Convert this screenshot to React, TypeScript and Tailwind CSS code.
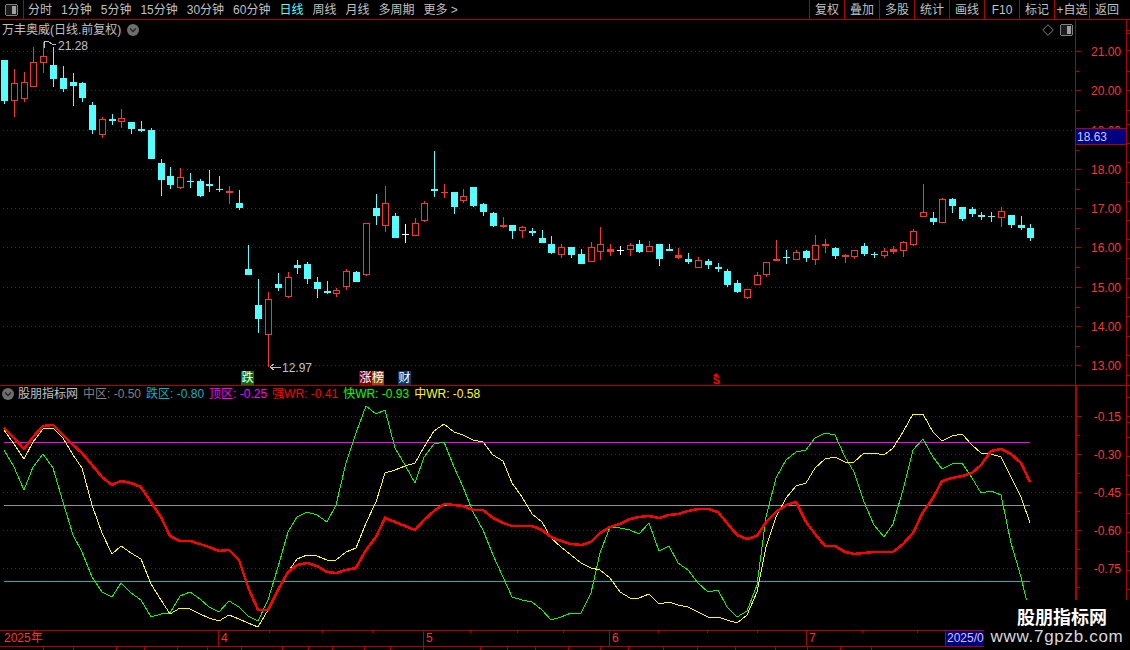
type Kind = "c" | "r" | "w";
// x, wick top, wick bottom, body top, body bottom, kind
const CANDLES: [number, number, number, number, number, Kind][] = [
  [4, 60, 104, 60, 101, "c"], [14, 69, 117, 83, 101, "r"], [24, 72, 102, 82, 99, "r"], [33, 47, 87, 62, 87, "r"],
  [43, 42, 73, 56, 63, "r"], [53, 47, 87, 65, 79, "c"], [63, 66, 92, 78, 89, "c"], [73, 73, 106, 82, 86, "c"],
  [82, 82, 102, 83, 98, "c"], [92, 102, 134, 105, 130, "c"], [102, 117, 138, 119, 135, "r"], [112, 114, 125, 119, 121, "c"],
  [121, 109, 128, 118, 122, "r"], [131, 122, 134, 122, 129, "c"], [141, 121, 132, 129, 131, "c"], [151, 128, 159, 130, 159, "c"],
  [161, 159, 196, 163, 180, "c"], [170, 167, 189, 176, 185, "c"], [180, 168, 189, 177, 188, "r"], [190, 173, 188, 181, 182, "c"],
  [200, 179, 197, 181, 196, "c"], [209, 170, 192, 184, 186, "c"], [219, 176, 192, 189, 190, "c"], [229, 186, 204, 191, 193, "r"],
  [239, 190, 210, 203, 208, "c"], [248, 245, 275, 269, 275, "c"], [258, 279, 333, 305, 319, "c"], [268, 292, 367, 299, 335, "r"],
  [278, 273, 291, 284, 288, "c"], [288, 272, 298, 277, 297, "r"], [297, 260, 274, 265, 268, "c"], [307, 262, 284, 264, 279, "c"],
  [317, 277, 298, 282, 289, "c"], [327, 281, 294, 291, 293, "c"], [336, 288, 297, 290, 294, "r"], [346, 269, 290, 271, 287, "r"],
  [356, 271, 282, 272, 282, "c"], [366, 223, 276, 223, 275, "r"], [376, 194, 225, 208, 216, "c"], [385, 186, 232, 203, 226, "r"],
  [395, 213, 238, 216, 238, "c"], [405, 224, 243, 234, 235, "w"], [415, 218, 236, 223, 236, "r"], [424, 201, 222, 203, 221, "r"],
  [434, 151, 197, 189, 191, "c"], [444, 184, 198, 192, 193, "r"], [454, 192, 214, 192, 207, "c"], [463, 189, 203, 196, 201, "r"],
  [473, 187, 207, 187, 206, "c"], [483, 203, 216, 204, 212, "c"], [493, 212, 227, 213, 226, "c"], [503, 217, 228, 225, 227, "r"],
  [512, 225, 239, 225, 231, "c"], [522, 226, 238, 227, 231, "r"], [532, 228, 236, 231, 233, "c"], [542, 230, 243, 238, 243, "c"],
  [551, 236, 254, 244, 253, "c"], [561, 244, 258, 247, 255, "r"], [571, 247, 258, 247, 255, "c"], [581, 249, 264, 254, 264, "c"],
  [591, 242, 262, 247, 262, "r"], [600, 227, 260, 244, 252, "r"], [610, 244, 256, 249, 252, "r"], [620, 246, 255, 250, 251, "w"],
  [630, 243, 256, 245, 250, "r"], [639, 240, 253, 244, 252, "c"], [649, 241, 252, 246, 252, "r"], [659, 244, 266, 244, 259, "c"],
  [669, 244, 251, 249, 251, "c"], [678, 248, 259, 255, 258, "r"], [688, 253, 264, 259, 262, "c"], [698, 257, 268, 260, 268, "r"],
  [708, 259, 269, 261, 265, "c"], [718, 263, 272, 267, 269, "c"], [727, 269, 287, 271, 285, "c"], [737, 280, 293, 283, 292, "c"],
  [747, 289, 299, 289, 298, "r"], [757, 272, 285, 275, 285, "r"], [766, 262, 277, 262, 275, "r"], [776, 240, 261, 259, 261, "r"],
  [786, 250, 264, 257, 258, "c"], [796, 250, 260, 252, 260, "r"], [806, 250, 262, 251, 258, "c"], [815, 235, 265, 245, 260, "r"],
  [825, 239, 253, 244, 246, "r"], [835, 247, 259, 248, 256, "c"], [845, 254, 263, 255, 257, "r"], [854, 250, 259, 250, 257, "r"],
  [864, 243, 256, 246, 254, "c"], [874, 252, 258, 254, 255, "c"], [884, 248, 258, 251, 256, "r"], [893, 246, 254, 249, 252, "r"],
  [903, 241, 257, 242, 251, "r"], [913, 229, 246, 231, 245, "r"], [923, 184, 217, 212, 217, "r"], [933, 212, 225, 218, 222, "c"],
  [942, 198, 223, 199, 223, "r"], [952, 198, 213, 199, 206, "c"], [962, 207, 221, 207, 219, "c"], [972, 207, 217, 209, 214, "c"],
  [981, 212, 220, 215, 217, "c"], [991, 212, 222, 216, 217, "c"], [1001, 207, 227, 211, 218, "r"], [1011, 215, 228, 215, 225, "c"],
  [1021, 216, 230, 225, 228, "c"], [1030, 224, 241, 228, 238, "c"],
];

const RED_WR = [
  428, 438, 449, 437, 426, 425, 435, 445, 453, 465, 477, 485, 481, 483, 487, 502, 517, 536, 541, 541,
  544, 547, 551, 550, 560, 587, 610, 610, 590, 572, 565, 563, 566, 572, 573, 570, 568, 550, 537, 518,
  522, 526, 530, 520, 511, 504, 505, 506, 510, 510, 518, 523, 526, 526, 526, 530, 537, 541, 544, 545,
  542, 533, 527, 524, 519, 517, 516, 518, 515, 514, 511, 509, 509, 512, 523, 535, 539, 536, 522, 512,
  505, 502, 522, 534, 546, 546, 552, 554, 553, 552, 552, 552, 544, 533, 512, 498, 481, 478, 476, 473,
  465, 451, 449, 454, 463, 482,
];
const YELLOW_WR = [
  430, 444, 459, 442, 429, 428, 438, 455, 468, 505, 533, 554, 546, 553, 559, 584, 600, 614, 608, 609,
  614, 618, 621, 615, 619, 623, 627, 610, 589, 572, 559, 555, 556, 560, 560, 552, 548, 523, 502, 473,
  470, 466, 463, 447, 431, 424, 432, 435, 440, 442, 455, 461, 483, 497, 514, 522, 538, 547, 555, 563,
  568, 570, 578, 592, 598, 598, 594, 604, 602, 605, 607, 612, 617, 617, 620, 623, 615, 592, 547, 517,
  498, 486, 483, 468, 459, 457, 462, 462, 453, 453, 455, 448, 432, 414, 414, 432, 441, 436, 434, 445,
  453, 454, 457, 477, 497, 523,
];
const GREEN_WR = [
  450, 467, 490, 467, 454, 468, 502, 535, 552, 577, 592, 597, 583, 593, 600, 617, 614, 613, 596, 592,
  599, 607, 612, 601, 607, 616, 621, 600, 567, 532, 517, 512, 515, 522, 505, 463, 433, 406, 414, 410,
  448, 465, 483, 457, 444, 442, 467, 487, 512, 530, 555, 577, 597, 600, 602, 610, 620, 617, 613, 613,
  593, 553, 527, 528, 530, 534, 523, 551, 546, 563, 570, 583, 592, 590, 607, 617, 611, 585, 517, 478,
  460, 452, 450, 438, 433, 435, 457, 472, 502, 525, 537, 524, 490, 450, 439, 457, 469, 464, 463, 478,
  493, 491, 495, 543, 577, 615,
];

const PRICE_TICKS: [number, string][] = [
  [51, "21.00"], [90, "20.00"], [130, "19.00"], [169, "18.00"], [208, "17.00"], [247, "16.00"], [287, "15.00"], [326, "14.00"], [365, "13.00"],
];
const WR_TICKS: [number, string][] = [
  [416, "-0.15"], [454, "-0.30"], [492, "-0.45"], [530, "-0.60"], [568, "-0.75"],
];
const PERIODS = ["分时", "1分钟", "5分钟", "15分钟", "30分钟", "60分钟", "日线", "周线", "月线", "多周期", "更多 >"];
const TOOLS = ["复权", "叠加", "多股", "统计", "画线", "F10", "标记", "+自选", "返回"];
const LEGEND = [
  { label: "中区: -0.50", className: "text-[#808080]" },
  { label: "跌区: -0.80", className: "text-[#10b0c0]" },
  { label: "顶区: -0.25", className: "text-[#ff00ff]" },
  { label: "强WR: -0.41", className: "text-[#ff0000]" },
  { label: "快WR: -0.93", className: "text-[#00ff00]" },
  { label: "中WR: -0.58", className: "text-[#ffff00]" },
];
const MONTHS = [
  { label: "2025年", className: "w-[218px] pl-[4px]" },
  { label: "4", className: "w-[205px] border-l border-[#b00000] pl-[2px]" },
  { label: "5", className: "w-[186px] border-l border-[#b00000] pl-[2px]" },
  { label: "6", className: "w-[197px] border-l border-[#b00000] pl-[2px]" },
  { label: "7", className: "w-[139px] border-l border-[#b00000] pl-[2px]" },
];
const BAR_TICKS = [269, 322, 372, 470, 517, 563, 658, 707, 757, 862, 917];
const FOOT_TICKS = [43, 73, 116, 144, 177, 207, 241, 282, 308, 332, 364, 390, 423, 480, 507, 535, 568, 600, 628, 663, 697, 735, 775, 807, 840, 871];
const SIDE_TICKS = [30, 33, 50, 71, 90, 110, 124, 143, 162, 182, 201, 220, 239, 258, 278, 297, 316, 336, 355, 375, 385, 397, 416, 422, 437, 456, 475, 494, 513, 532, 551, 570, 589];

const RED = "#ff3232";
const CYAN = "#54ffff";
const LINE = "#b00000";
const DOT = "#a00000";

function toPoints(ys: number[]) {
  return ys.map((y, i) => `${CANDLES[i][0]},${y}`).join(" ");
}

function ChevronBadge() {
  return (
    <svg width="12" height="12" viewBox="0 0 12 12" className="shrink-0">
      <circle cx="6" cy="6" r="6" fill="#6e6e6e" />
      <path d="M3 4.5 L6 7.5 L9 4.5" fill="none" stroke="#262626" strokeWidth="1.4" />
    </svg>
  );
}

function PanelIcon() {
  return (
    <svg width="13" height="12" viewBox="0 0 13 12" className="shrink-0" shapeRendering="crispEdges">
      <rect x="0.5" y="0.5" width="12" height="11" rx="2" fill="#1c1c1c" stroke="#808080" />
      <rect x="7" y="2" width="4" height="8" fill="#a0a0a0" />
    </svg>
  );
}

function Candle({ c }: { c: (typeof CANDLES)[number] }) {
  const [x, hi, lo, top, bottom, kind] = c;
  const color = kind === "c" ? CYAN : kind === "w" ? "#ffffff" : RED;
  const h = bottom - top;
  const hollow = kind === "r" && h > 3;
  return (
    <g shapeRendering="crispEdges">
      <rect x={x} y={hi} width="1" height={lo - hi} fill={color} />
      {hollow ? (
        <rect x={x - 2.5} y={top + 0.5} width="6" height={h - 1} fill="#000" stroke={color} />
      ) : (
        <rect x={x - 3} y={top} width="7" height={Math.max(h, 1)} fill={color} />
      )}
    </g>
  );
}

function Dots({ ys }: { ys: number[] }) {
  return (
    <g shapeRendering="crispEdges">
      {ys.map((y) => (
        <line key={y} x1="3" x2="1075" y1={y + 0.5} y2={y + 0.5} stroke={DOT} strokeDasharray="1 3" />
      ))}
    </g>
  );
}

function SideRail() {
  return (
    <g shapeRendering="crispEdges">
      <rect x="1126" y="20" width="1" height="630" fill={LINE} />
      {SIDE_TICKS.map((y) => (
        <rect key={y} x="1127" y={y} width="3" height="1" fill={LINE} />
      ))}
    </g>
  );
}

function PriceChart() {
  return (
    <svg width="1075" height="365" viewBox="0 20 1075 365" className="block shrink-0">
      <Dots ys={PRICE_TICKS.map((t) => t[0])} />
      {CANDLES.map((c) => (
        <Candle key={c[0]} c={c} />
      ))}
      <g fill="none" stroke="#c0c0c0" shapeRendering="crispEdges">
        <path d="M44 48 V41 L48 41 L52 44 L56 45" />
        <path d="M270 367 H281 M270 367 L274 364 M270 367 L274 370" />
      </g>
      <g fill="#c0c0c0" fontSize="12">
        <text x="58" y="50">21.28</text>
        <text x="282" y="372">12.97</text>
      </g>
      <path d="M716 373 L719 376 H713 Z" fill="#ff0000" />
    </svg>
  );
}

function PriceAxis() {
  return (
    <svg width="55" height="365" viewBox="1075 20 55 365" className="block shrink-0">
      <g shapeRendering="crispEdges">
        <rect x="1075" y="20" width="1" height="365" fill={LINE} />
        {PRICE_TICKS.map(([y]) => (
          <g key={y}>
            <rect x="1076" y={y} width="5" height="1" fill={LINE} />
            <rect x="1076" y={y + 20} width="3" height="1" fill={LINE} />
          </g>
        ))}
      </g>
      <SideRail />
      <g fill={RED} fontSize="12">
        {PRICE_TICKS.map(([y, label]) => (
          <text key={y} x="1121" y={y + 5} textAnchor="end">{label}</text>
        ))}
      </g>
      <rect x="1075.5" y="128.5" width="51" height="16" fill="#000080" stroke={LINE} shapeRendering="crispEdges" />
      <text x="1077" y="141" fontSize="12" fill="#c8c8ff">18.63</text>
    </svg>
  );
}

function WrChart() {
  return (
    <svg width="1075" height="244" viewBox="0 386 1075 244" className="block shrink-0">
      <Dots ys={WR_TICKS.map((t) => t[0])} />
      <g shapeRendering="crispEdges">
        <rect x="4" y="442" width="1026" height="1" fill="#ff00ff" />
        <rect x="4" y="505" width="1026" height="1" fill="#909090" />
        <rect x="4" y="581" width="1026" height="1" fill="#20b0b0" />
      </g>
      <g fill="none" shapeRendering="crispEdges">
        <polyline points={toPoints(GREEN_WR)} stroke="#00ff00" />
        <polyline points={toPoints(YELLOW_WR)} stroke="#ffff00" />
        <polyline points={toPoints(RED_WR)} stroke="#ff0000" strokeWidth="2.5" />
      </g>
    </svg>
  );
}

function WrAxis() {
  return (
    <svg width="55" height="244" viewBox="1075 386 55 244" className="block shrink-0">
      <g shapeRendering="crispEdges">
        <rect x="1075" y="386" width="2" height="244" fill={LINE} />
        {WR_TICKS.map(([y]) => (
          <g key={y}>
            <rect x="1077" y={y} width="5" height="1" fill={LINE} />
            <rect x="1077" y={y + 19} width="3" height="1" fill={LINE} />
          </g>
        ))}
      </g>
      <SideRail />
      <g fill={RED} fontSize="12">
        {WR_TICKS.map(([y, label]) => (
          <text key={y} x="1121" y={y + 5} textAnchor="end">{label}</text>
        ))}
      </g>
    </svg>
  );
}

export default function App() {
  return (
    <div className="relative flex h-[650px] w-[1130px] flex-col overflow-hidden bg-black font-['Liberation_Sans','Noto_Sans_CJK_SC',sans-serif] text-[12px] leading-[14px] text-[#c0c0c0]">
      {/* 顶部周期栏 */}
      <div className="flex h-[20px] shrink-0 items-center border-b border-[#b00000]">
        <div className="flex h-full w-[24px] items-center justify-center border-r border-[#b00000]">
          <PanelIcon />
        </div>
        <div className="ml-[4px] flex gap-[9px]">
          {PERIODS.map((p) => (
            <span key={p} className={p === "日线" ? "text-[#54ffff]" : ""}>{p}</span>
          ))}
        </div>
        <div className="ml-auto flex h-full pr-[6px]">
          {TOOLS.map((t) => (
            <span key={t} className="flex w-[35px] items-center justify-center border-l border-[#b00000] whitespace-nowrap">{t}</span>
          ))}
        </div>
      </div>

      {/* K线 */}
      <div className="relative flex h-[366px] shrink-0 border-b border-[#b00000]">
        <PriceChart />
        <PriceAxis />
        <div className="absolute left-[2px] top-[3px] flex items-center gap-[6px]">
          <span>万丰奥威(日线.前复权)</span>
          <ChevronBadge />
        </div>
        <div className="absolute left-[1042px] top-[4px] flex items-center gap-[6px]">
          <svg width="12" height="12" viewBox="0 0 12 12">
            <path d="M6 0.7 L11.3 6 L6 11.3 L0.7 6 Z" fill="none" stroke="#808080" />
          </svg>
          <PanelIcon />
        </div>
        <span className="absolute left-[241px] top-[351px] w-[13px] bg-[#007000] text-center text-white">跌</span>
        <span className="absolute left-[359px] top-[351px] w-[13px] bg-[#800000] text-center text-white">涨</span>
        <span className="absolute left-[372px] top-[351px] w-[12px] bg-[#8b4a10] text-center text-white">榜</span>
        <span className="absolute left-[398px] top-[351px] w-[13px] bg-[#003a70] text-center text-white">财</span>
        <span className="absolute left-[711px] top-[355px] w-[11px] text-center text-[11px] leading-[10px] font-bold text-[#ff0000]">S</span>
      </div>

      {/* 指标 */}
      <div className="relative flex h-[244px] shrink-0">
        <WrChart />
        <WrAxis />
        <div className="absolute left-[2px] top-[1px] flex items-center gap-[5px] whitespace-nowrap">
          <div className="flex items-center gap-[4px]">
            <ChevronBadge />
            <span>股朋指标网</span>
          </div>
          {LEGEND.map((l) => (
            <span key={l.label} className={l.className}>{l.label}</span>
          ))}
        </div>
      </div>

      {/* 日期栏 */}
      <div className="relative flex h-[17px] shrink-0 border-y border-[#b00000] text-[#ff3232]">
        {MONTHS.map((m) => (
          <span key={m.label} className={m.className}>{m.label}</span>
        ))}
        <span className="w-[39px] overflow-hidden border-l border-[#b00000] bg-[#000080] pl-[1px] text-[#c8c8ff]">2025/0</span>
        {BAR_TICKS.map((x) => (
          <span key={x} className="absolute top-0 h-[2px] w-px bg-[#b00000]" style={{ left: x }} />
        ))}
      </div>
      <svg width="1130" height="3" className="block shrink-0" shapeRendering="crispEdges">
        {FOOT_TICKS.map((x) => (
          <rect key={x} x={x} y="0" width="1" height="3" fill={LINE} />
        ))}
      </svg>

      {/* 水印 */}
      <div className="absolute bottom-0 right-0 flex h-[50px] w-[146px] flex-col items-center bg-black pt-[7px]">
        <span className="ml-[10px] text-[18px] leading-[22px] font-bold text-white">股朋指标网</span>
        <span className="text-[17px] leading-[15px] tracking-[0.7px] text-[#d8d8d8]">www.7gpzb.com</span>
      </div>
    </div>
  );
}
